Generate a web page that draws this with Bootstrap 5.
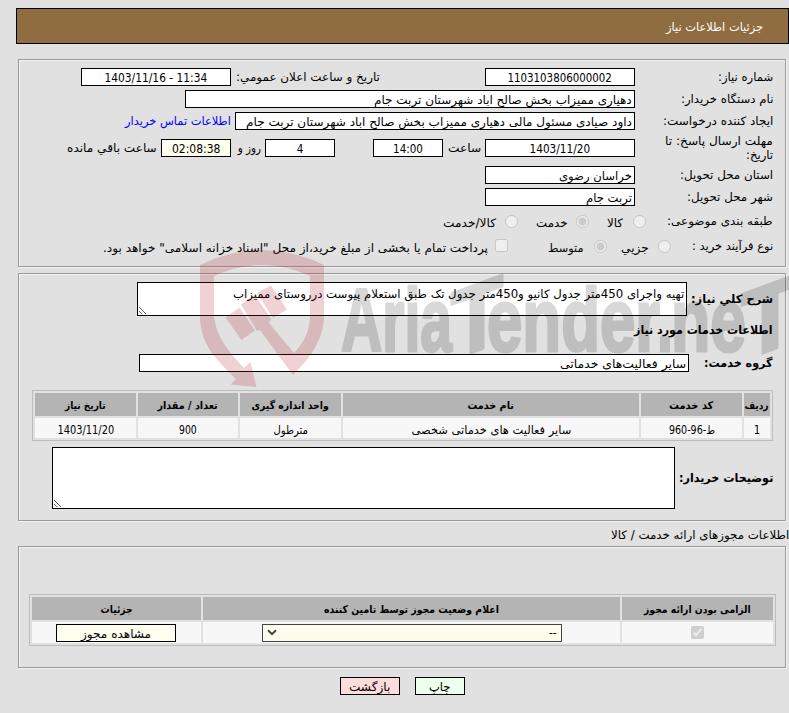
<!DOCTYPE html>
<html lang="fa" dir="rtl">
<head>
<meta charset="utf-8">
<meta name="viewport" content="width=device-width, initial-scale=1">
<title>جزئیات اطلاعات نیاز</title>
<link rel="stylesheet" href="https://cdn.jsdelivr.net/npm/bootstrap@5.3.0/dist/css/bootstrap.min.css">
<style>
body{background:#e1e1e1;color:#000;font:11.5px/14px "DejaVu Sans Condensed","DejaVu Sans",sans-serif;width:789px;height:713px;overflow:hidden}
.t{display:inline-block;white-space:nowrap;transform-origin:100% 50%}
.text-center>.t,.grid .t{transform-origin:50% 50%}
.titlebar{height:36px;margin:8px 0 15px 16px;padding:2px 25px 0 0;background:#8f6d41;border:1px solid #000;color:#fff}
.panel{border:1px solid #9a9a9a;box-shadow:1px 1px 0 #f3f3f3,inset 1px 1px 0 #f3f3f3;margin:0 3px 0 18px}
.p1{height:208px;padding:8px 12px 0 0}
.p2{height:248px;padding:8px 12px 0 0;margin-top:6px}
.p3{height:122px;padding:47px 9px 0 10px}
.line{height:18px;margin-bottom:4px;display:flex;align-items:center}
.lab{width:138px;flex:none}
.box{height:18px;background:#fff;border:1px solid #000;flex:none;padding:2px 2px 0;line-height:14px;display:block;white-space:nowrap}
.ivory{background:#fffff0}
.w50{width:50px}.w60{width:60px}.w70{width:70px}.w120{width:120px}.w150{width:150px}.w400{width:400px}.w450{width:450px}.w550{width:550px}
.cell{flex:none;padding-right:4px}
input[type=radio],input[type=checkbox]{width:13px;height:13px;margin:0;flex:none;display:block}
.contact{color:#00f}
.area{border:1px solid #000;background:#fff;resize:both;overflow:hidden;flex:none}
.grid{display:grid;gap:2px;padding:2px;border:1px solid #bcbcbc}
.grid>div{display:flex;align-items:center;justify-content:center;background:#f7f7f7}
.grid>.hd{background:#b4b4b4;font-weight:700;font-size:10.5px}
.g1{grid-template-columns:26px 101px 296px 101px 100px 1fr;grid-template-rows:23px 20px;width:741px;height:51px;margin-top:18px}
.g2{grid-template-columns:151px 417px 1fr;grid-template-rows:23px 21px;width:747px;height:52px}
.pick{width:300px;border-color:#444;background:#fdfdee}
.wm{position:absolute;left:190px;top:240px;pointer-events:none}
.wm text{font:bold 89px "Liberation Sans",sans-serif}
</style>
</head>
<body>
<header class="titlebar d-flex align-items-center"><span class="t" data-w="97">جزئیات اطلاعات نیاز</span></header>

<section class="panel p1">
 <div class="line"><div class="lab"><span class="t" data-w="55">شماره نیاز:</span></div><div class="box w150 text-center"><span class="t" data-w="104">1103103806000002</span></div>
  <div class="cell" style="width:254px;padding-right:105px"><span class="t" data-w="144">تاریخ و ساعت اعلان عمومي:</span></div><div class="box w150 text-center" dir="ltr"><span class="t" data-w="103">1403/11/16 - 11:34</span></div></div>
 <div class="line"><div class="lab"><span class="t" data-w="92">نام دستگاه خریدار:</span></div><div class="box w450"><span class="t" data-w="258">دهیاری ممیزاب بخش صالح اباد شهرستان تربت جام</span></div></div>
 <div class="line"><div class="lab"><span class="t" data-w="110">ایجاد کننده درخواست:</span></div><div class="box w400"><span class="t" data-w="386">داود صیادی مسئول مالی دهیاری ممیزاب بخش صالح اباد شهرستان تربت جام</span></div><div class="cell contact"><span class="t" data-w="106">اطلاعات تماس خریدار</span></div></div>
 <div class="line" style="height:28px"><div class="lab"><span class="t" data-w="108">مهلت ارسال پاسخ: تا</span><br><span class="t" data-w="27">تاریخ:</span></div><div class="box w150 text-center"><span class="t" data-w="61">1403/11/20</span></div>
  <div class="cell" style="width:42px"><span class="t" data-w="33">ساعت</span></div><div class="box w70 text-center"><span class="t" data-w="30">14:00</span></div>
  <div class="box w70 text-center" style="margin-right:38px"><span class="t">4</span></div><div class="cell" style="width:34px"><span class="t" data-w="23">روز و</span></div><div class="box w70 ivory text-center"><span class="t" data-w="48">02:08:38</span></div><div class="cell"><span class="t" data-w="90">ساعت باقي مانده</span></div></div>
 <div class="line"><div class="lab"><span class="t" data-w="93">استان محل تحویل:</span></div><div class="box w150"><span class="t" data-w="73">خراسان رضوی</span></div></div>
 <div class="line"><div class="lab"><span class="t" data-w="86">شهر محل تحویل:</span></div><div class="box w150"><span class="t" data-w="46">تربت جام</span></div></div>
 <div class="line" style="margin-top:6px"><div style="width:127px"><span class="t" data-w="106">طبقه بندی موضوعی:</span></div><input type="radio" disabled><div style="width:44px;padding:3px 10px 0"><span class="t" data-w="16">كالا</span></div><input type="radio" disabled checked><div style="width:58px;padding:3px 8px 0"><span class="t" data-w="32">خدمت</span></div><input type="radio" disabled><div style="padding:3px 9px 0"><span class="t" data-w="53">کالا/خدمت</span></div></div>
 <div class="line" style="margin-top:7px"><div style="width:102px"><span class="t" data-w="81">نوع فرآیند خرید :</span></div><input type="radio" disabled><div style="width:51px;padding:3px 9px 0"><span class="t" data-w="28">جزیي</span></div><input type="radio" disabled checked><div style="width:86px;padding:3px 10px 0"><span class="t" data-w="36">متوسط</span></div><input type="checkbox" style="margin-top:-2px" disabled><div style="padding:3px 7px 0"><span class="t" data-w="385">پرداخت تمام یا بخشی از مبلغ خرید،از محل "اسناد خزانه اسلامی" خواهد بود.</span></div></div>
</section>

<section class="panel p2">
 <div class="d-flex align-items-center"><b style="width:86px"><span class="t" data-w="82">شرح کلي نیاز:</span></b><div class="area w550" style="height:34px;padding:4px 2px"><span class="t" data-w="451">تهیه واجرای 450متر جدول کانیو و450متر جدول تک طبق استعلام پیوست درروستای ممیزاب</span></div></div>
 <div style="margin-top:7px;height:31px"><b class="t" data-w="139">اطلاعات خدمات مورد نیاز</b></div>
 <div class="line mb-0"><b style="width:84px"><span class="t" data-w="69">گروه خدمت:</span></b><div class="box w550"><span class="t" data-w="126">سایر فعالیت‌های خدماتی</span></div></div>
 <div class="grid g1">
  <div class="hd"><span class="t" data-w="24">ردیف</span></div><div class="hd"><span class="t" data-w="44">کد خدمت</span></div><div class="hd"><span class="t" data-w="46">نام خدمت</span></div><div class="hd"><span class="t" data-w="77">واحد اندازه گیری</span></div><div class="hd"><span class="t" data-w="60">تعداد / مقدار</span></div><div class="hd"><span class="t" data-w="41">تاریخ نیاز</span></div>
  <div class="pt-1"><span class="t">1</span></div><div class="pt-1"><span class="t" data-w="46">ط-96-960</span></div><div class="pt-1"><span class="t" data-w="160">سایر فعالیت های خدماتی شخصی</span></div><div class="pt-1"><span class="t" data-w="34">مترطول</span></div><div class="pt-1"><span class="t" data-w="18">900</span></div><div class="pt-1"><span class="t" data-w="57">1403/11/20</span></div>
 </div>
 <div class="d-flex align-items-center" style="margin-top:6px"><b style="width:98px"><span class="t" data-w="94">توضیحات خریدار:</span></b><div class="area" style="width:623px;height:62px"></div></div>
</section>

<div style="height:25px;padding-top:7px"><span class="t" data-w="178">اطلاعات مجوزهای ارائه خدمت / کالا</span></div>

<section class="panel p3">
 <div class="grid g2">
  <div class="hd"><span class="t" data-w="107">الزامی بودن ارائه مجوز</span></div><div class="hd"><span class="t" data-w="175">اعلام وضعیت مجوز توسط تامین کننده</span></div><div class="hd"><span class="t" data-w="32">جزئیات</span></div>
  <div><input type="checkbox" checked disabled></div><div><div class="box pick d-flex justify-content-between align-items-center pt-0 ps-1 pe-1"><span>--</span><svg width="10" height="7" viewBox="0 0 10 7"><path d="M1 1.2 5 5.2 9 1.2" fill="none" stroke="#444" stroke-width="2"/></svg></div></div><div><div class="box w120 ivory text-center" style="margin-right:1px"><span class="t" data-w="70">مشاهده مجوز</span></div></div>
 </div>
</section>

<footer class="d-flex" style="margin:9px 324px 0 0;gap:15px"><div class="box w50 text-center" style="background:#edffed"><span class="t" data-w="21">چاپ</span></div><div class="box w60 text-center" style="background:#ffdcdc"><span class="t" data-w="41">بازگشت</span></div></footer>

<svg class="wm" width="599" height="150" viewBox="190 240 599 150" direction="ltr">
 <g fill="#b01020" fill-opacity=".19">
  <path fill-rule="evenodd" d="M200 265Q262 235 324 265V316C324 340 309 359 293 375L260 330 257 331 241 304.500 255 295 271 319 269 323 294 353C304 342 310 332 310 314V276Q262 254 214 276V314C215 337 231 354 244 368L250.500 362 256.500 387 230.500 384.500 236 379C218 361 200 346 200 316Z"/>
  <path d="M225.500 317.500 239.500 307.500 255 330.500 241.500 340Z"/>
  <path d="M257 293 271 285.500 287 309.500 273 318Z"/>
 </g>
 <g opacity=".15" direction="ltr" stroke="#000" stroke-width="3" stroke-linejoin="round">
  <text x="341" y="350.500" textLength="111" lengthAdjust="spacingAndGlyphs">Aria</text>
  <text transform="translate(477 350.500) skewY(-20) scale(1 1.08)" x="-26" y="0" textLength="52" lengthAdjust="spacingAndGlyphs">T</text>
  <text x="487" y="350.500" textLength="173" lengthAdjust="spacingAndGlyphs">ender</text>
  <text x="657" y="350.500" textLength="16" lengthAdjust="spacingAndGlyphs">.</text>
  <text x="671" y="350.500" textLength="75" lengthAdjust="spacingAndGlyphs">ne</text>
  <text transform="translate(770 350.500) skewY(-20) scale(1 1.08)" x="-29" y="0" textLength="58" lengthAdjust="spacingAndGlyphs">T</text>
 </g>
</svg>

<script src="https://cdn.jsdelivr.net/npm/bootstrap@5.3.0/dist/js/bootstrap.bundle.min.js"></script>
<script>
document.querySelectorAll('[data-w]').forEach(function(e){e.style.transform='scaleX('+(e.dataset.w/e.offsetWidth)+')';});
</script>
</body>
</html>
